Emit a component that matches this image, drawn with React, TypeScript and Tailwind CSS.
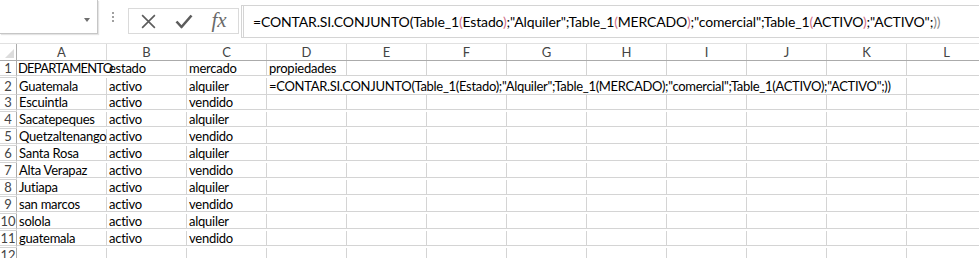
import React from "react";

const cellFont = { fontFamily: "Lato, 'Liberation Sans', sans-serif" };

const cols = ["A", "B", "C", "D", "E", "F", "G", "H", "I", "J", "K", "L"];

const rows: string[][] = [
  ["DEPARTAMENTO", "estado", "mercado", "propiedades"],
  ["Guatemala", "activo", "alquiler", ""],
  ["Escuintla", "activo", "vendido", ""],
  ["Sacatepeques", "activo", "alquiler", ""],
  ["Quetzaltenango", "activo", "vendido", ""],
  ["Santa Rosa", "activo", "alquiler", ""],
  ["Alta Verapaz", "activo", "vendido", ""],
  ["Jutiapa", "activo", "alquiler", ""],
  ["san marcos", "activo", "vendido", ""],
  ["solola", "activo", "alquiler", ""],
  ["guatemala", "activo", "vendido", ""],
];

const formula =
  '=CONTAR.SI.CONJUNTO(Table_1(Estado);"Alquiler";Table_1(MERCADO);"comercial";Table_1(ACTIVO);"ACTIVO";))';

function Paren({ c }: { c: string }) {
  return <span className="text-[#d0708a]">{c}</span>;
}

function FormulaBarText() {
  return (
    <span className="whitespace-nowrap">
      =CONTAR.SI.CONJUNTO(Table_1<Paren c="(" />Estado<Paren c=")" />;"Alquiler";Table_1<Paren c="(" />MERCADO
      <Paren c=")" />;"comercial";Table_1<Paren c="(" />ACTIVO<Paren c=")" />;"ACTIVO";<span className="text-[#8a8a8a]">))</span>
    </span>
  );
}

function TopBar() {
  return (
    <div className="flex h-[43px] bg-white">
      <div className="relative h-[34px] w-[98px] shrink-0 border-r border-b border-[#c6c6c6] shadow-[1px_1px_1px_#e4e4e4]">
        <div className="absolute right-[7px] top-[18px] h-0 w-0 border-x-[3px] border-t-[4px] border-x-transparent border-t-[#6f6f6f]" />
      </div>
      <div className="flex w-[30px] shrink-0 flex-col items-center justify-center gap-[2px] pb-[9px]">
        <div className="h-[2px] w-[2px] bg-[#a0a0a0]" />
        <div className="h-[2px] w-[2px] bg-[#a0a0a0]" />
        <div className="h-[2px] w-[2px] bg-[#a0a0a0]" />
      </div>
      <div className="mt-[8px] flex h-[26px] w-[111px] shrink-0 items-center border border-[#dadada]">
        <div className="flex w-[38px] justify-center">
          <svg width="17" height="17" viewBox="0 0 16 16">
            <path d="M2 2 L14 14 M14 2 L2 14" stroke="#5c5c5c" strokeWidth="1.5" fill="none" />
          </svg>
        </div>
        <div className="flex w-[34px] justify-center">
          <svg width="18" height="16" viewBox="0 0 18 16">
            <path d="M1.5 8.5 L6.5 14 L16.5 2.5" stroke="#5c5c5c" strokeWidth="2.6" fill="none" strokeLinejoin="round" />
          </svg>
        </div>
        <div
          className="flex w-[36px] justify-center text-[21px] italic text-[#6a6a6a]"
          style={{ fontFamily: "'Liberation Serif', serif" }}
        >
          fx
        </div>
      </div>
      <div
        className="mt-[5px] ml-[2px] flex h-[33px] min-w-0 flex-1 items-center overflow-hidden border-y border-l-[3px] border-double border-[#d4d4d4] pl-[9px] text-[14px] tracking-[-0.15px] text-black"
        style={cellFont}
      >
        <FormulaBarText />
      </div>
    </div>
  );
}

const grid = "grid grid-cols-[17px_90px_repeat(11,80px)]";

function HeaderRow() {
  return (
    <div
      className={`${grid} h-[18px] border-t border-[#e1e1e1] border-b border-b-[#ababab] bg-white text-[13px] text-[#444]`}
      style={cellFont}
    >
      <div className="relative border-r border-[#ababab]">
        <svg className="absolute right-[2px] bottom-[2px]" width="9" height="9" viewBox="0 0 9 9">
          <path d="M9 0 L9 9 L0 9 Z" fill="#dcdcdc" />
        </svg>
      </div>
      {cols.map((c) => (
        <div key={c} className="flex items-center justify-center border-r border-[#d9d9d9] leading-none">
          {c}
        </div>
      ))}
    </div>
  );
}

function DataRow({ n, data }: { n: number; data: string[] }) {
  const isFormula = n === 2;
  const rest = isFormula ? 0 : 8;
  return (
    <div className={`${grid} h-[17px] text-[13px] tracking-[-0.25px] text-black`} style={cellFont}>
      <div className="flex items-center justify-center border-r border-b border-r-[#ababab] border-b-[#d9d9d9] leading-none tracking-normal text-[#444]">
        {n}
      </div>
      {data.slice(0, 3).map((v, i) => {
        const headCell = n === 1 && i === 0;
        return (
          <div
            key={i}
            className={`flex items-center border-b border-[#d4d4d4] leading-none whitespace-nowrap ${
              headCell ? "pl-[1px] tracking-[-0.8px]" : "border-r pl-[2px]"
            }`}
          >
            {v}
          </div>
        );
      })}
      {isFormula ? (
        <div className="col-span-8 flex items-center border-r border-b border-[#d4d4d4] pl-[2px] leading-none tracking-[-0.3px] whitespace-nowrap">
          {formula}
        </div>
      ) : (
        <div className="flex items-center border-r border-b border-[#d4d4d4] pl-[2px] leading-none whitespace-nowrap">
          {data[3]}
        </div>
      )}
      {Array.from({ length: rest }).map((_, i) => (
        <div key={i} className="border-r border-b border-[#d4d4d4]" />
      ))}
      <div className="border-r border-b border-[#d4d4d4]" />
    </div>
  );
}

export default function App() {
  return (
    <div className="h-[258px] w-[979px] overflow-hidden bg-white">
      <TopBar />
      <HeaderRow />
      {rows.map((r, i) => (
        <DataRow key={i} n={i + 1} data={r} />
      ))}
      <DataRow n={12} data={["", "", "", ""]} />
    </div>
  );
}
